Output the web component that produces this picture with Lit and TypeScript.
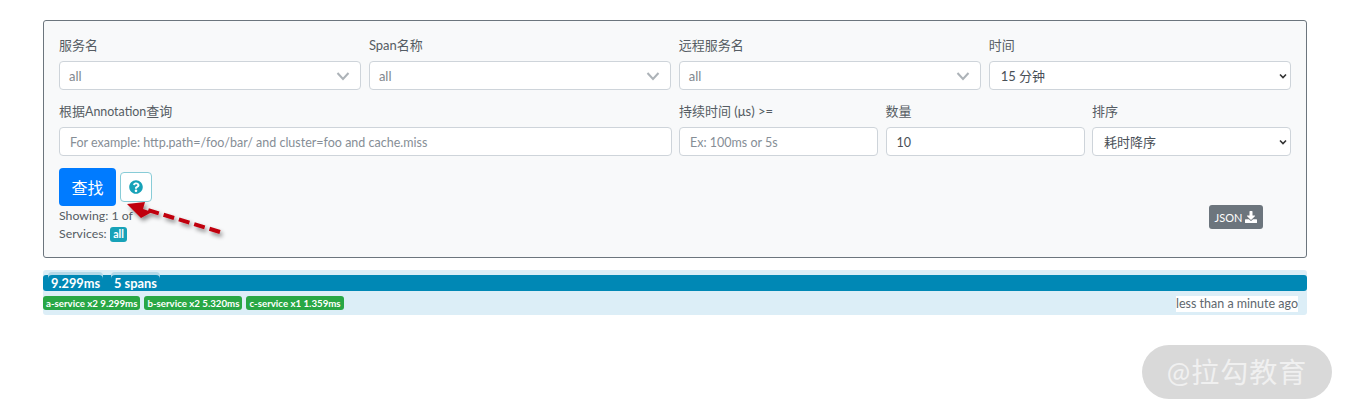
import { LitElement, html, css } from "lit";
import { customElement } from "lit/decorators.js";

@customElement("app-root")
export class AppRoot extends LitElement {
  static styles = css`
    :host {
      display: block;
      position: relative;
      width: 1350px;
      height: 417px;
      overflow: hidden;
      background: #fff;
      color: #495057;
      font-family: "Lato", "Noto Sans CJK SC", sans-serif;
      font-size: 12.5px;
    }
    .page { padding: 20px 43px 0; }
    .card {
      position: relative;
      box-sizing: border-box;
      height: 238px;
      border: 1px solid #6c757d;
      border-radius: 3px;
      background: #f8f9fa;
      padding: 15px 15px 0;
    }
    .row { display: grid; gap: 7.5px; height: 66px; }
    .r1 { grid-template-columns: repeat(4, minmax(0, 1fr)); }
    .r2 { grid-template-columns: 612.5px repeat(3, minmax(0, 1fr)); }
    .field { display: flex; flex-direction: column; min-width: 0; }
    label { height: 25px; line-height: 18px; color: #555c63; white-space: nowrap; font-size: 13px; }
    label .latin { font-size: 12.4px; }
    .ctl {
      box-sizing: border-box;
      width: 100%;
      height: 29px;
      border: 1px solid #ced4da;
      border-radius: 4px;
      background: #fff;
      padding: 1px 10px 0;
      font: inherit;
      color: #495057;
      outline: none;
    }
    select.ctl {
      appearance: none;
      padding: 0 0 0 11px;
      font-size: 13px;
      background: #fff url("data:image/svg+xml,%3Csvg xmlns='http://www.w3.org/2000/svg' width='8' height='6'%3E%3Cpath d='M1 1.5l3 3 3-3' fill='none' stroke='%23333' stroke-width='1.6'/%3E%3C/svg%3E") no-repeat right 3px center;
    }
    input.ctl::placeholder { color: #868e96; opacity: 1; }
    .combo { display: flex; align-items: center; justify-content: space-between; color: #7f868d; padding: 0 7px 0 9px; font-size: 13px; }
    .actions { display: flex; align-items: center; gap: 4px; height: 38px; }
    .search {
      width: 57px; height: 38px; border: 0; border-radius: 4px; background: #007bff; color: #fff;
      font: inherit; font-size: 16px; padding: 0;
    }
    .help {
      display: flex; align-items: center; justify-content: center;
      box-sizing: border-box; width: 32px; height: 30px;
      border: 1.5px solid #88ccd7; border-radius: 4px; background: #fff; padding: 0;
    }
    .meta { line-height: 18px; color: #555c63; padding-top: 1px; font-size: 12.3px; }
    .meta div { height: 18px; }
    .tag {
      display: inline-block; background: #17a2b8; color: #fff; font-size: 10.5px; font-weight: 700;
      line-height: 15px; padding: 0 3.5px; border-radius: 3px;
    }
    .json {
      position: absolute; left: 1165px; top: 184px;
      display: flex; align-items: center; justify-content: center; gap: 3px;
      box-sizing: border-box; width: 54px; height: 24px;
      background: #6c757d; color: #fff; border-radius: 3px; font-size: 11px;
    }
    .trace {
      margin-top: 12px; height: 45px; box-sizing: border-box; padding-top: 5px;
      background: #dceef7; border-radius: 3px; position: relative;
    }
    .bar {
      display: flex; height: 16px; background: #0088b5; border-radius: 3px; color: #fff;
      font-weight: 700; font-size: 12.8px; line-height: 17px; padding-left: 5px; gap: 8px;
    }
    .bar span { padding: 0 3px; box-shadow: 0 -3px 0 #b5d9e8; border-radius: 4px 4px 0 0; background: #0088b5; }
    .line { display: flex; align-items: center; justify-content: space-between; height: 24px; }
    .badges { display: flex; gap: 4px; margin-top: -1px; }
    .badge {
      background: #28a745; color: #fff; font-size: 9.7px; font-weight: 700; line-height: 14px;
      padding: 0 3px; border-radius: 3px; white-space: nowrap;
    }
    .ago { background: #fff; color: #60676e; font-size: 12.5px; line-height: 16px; margin: 1px 9px 0 0; }
    .arrow { position: absolute; left: 120px; top: 195px; }
    .mark {
      position: absolute; left: 1142px; top: 345px; width: 190px; height: 54px; border-radius: 27px;
      background: #d9d9d9; color: #f0f0f0; font-size: 28px; line-height: 54px; text-align: center;
      letter-spacing: 1px;
    }
  `;

  private chevron() {
    return html`<svg width="20" height="20" viewBox="0 0 20 20"><path d="M4.5 7l5.5 6 5.5-6" fill="none" stroke="#adb3b8" stroke-width="2"/></svg>`;
  }

  render() {
    return html`
      <div class="page">
        <div class="card">
          <div class="row r1">
            <div class="field"><label>服务名</label><div class="ctl combo">all ${this.chevron()}</div></div>
            <div class="field"><label>Span名称</label><div class="ctl combo">all ${this.chevron()}</div></div>
            <div class="field"><label>远程服务名</label><div class="ctl combo">all ${this.chevron()}</div></div>
            <div class="field"><label>时间</label><select class="ctl"><option>15 分钟</option></select></div>
          </div>
          <div class="row r2">
            <div class="field"><label>根据<span class="latin">Annotation</span>查询</label><input class="ctl" placeholder="For example: http.path=/foo/bar/ and cluster=foo and cache.miss" /></div>
            <div class="field"><label>持续时间 (μs) >=</label><input class="ctl" placeholder="Ex: 100ms or 5s" /></div>
            <div class="field"><label>数量</label><input class="ctl" value="10" /></div>
            <div class="field"><label>排序</label><select class="ctl"><option>耗时降序</option></select></div>
          </div>
          <div class="actions">
            <button class="search">查找</button>
            <button class="help">
              <svg width="14" height="14" viewBox="0 0 512 512"><path fill="#17a2b8" d="M504 256c0 137-111 248-248 248S8 393 8 256 119 8 256 8s248 111 248 248zM263 90c-54 0-89 23-116 63-4 5-3 12 3 16l35 26c5 4 13 3 17-2 18-23 31-36 58-36 21 0 47 14 47 34 0 15-13 23-34 35-24 14-56 31-56 74v6c0 7 5 12 12 12h56c7 0 12-5 12-12v-3c0-30 87-31 87-112 0-61-63-101-121-101zm-7 258c-26 0-48 21-48 48s22 48 48 48 48-21 48-48-22-48-48-48z"/></svg>
            </button>
          </div>
          <div class="meta">
            <div>Showing: 1 of</div>
            <div>Services: <span class="tag">all</span></div>
          </div>
          <div class="json">JSON
            <svg width="12" height="12" viewBox="0 0 512 512"><path fill="#fff" d="M216 0h80c13 0 24 11 24 24v168h88c18 0 27 21 14 34L270 378c-7 8-21 8-28 0L90 226c-13-13-4-34 14-34h88V24c0-13 11-24 24-24zM512 376v112c0 13-11 24-24 24H24c-13 0-24-11-24-24V376c0-13 11-24 24-24h147l49 49c20 20 52 20 72 0l49-49h147c13 0 24 11 24 24z"/></svg>
          </div>
        </div>
        <div class="trace">
          <div class="bar"><span>9.299ms</span><span>5 spans</span></div>
          <div class="line">
            <div class="badges">
              <span class="badge">a-service x2 9.299ms</span>
              <span class="badge">b-service x2 5.320ms</span>
              <span class="badge">c-service x1 1.359ms</span>
            </div>
            <span class="ago">less than a minute ago</span>
          </div>
        </div>
      </div>
      <svg class="arrow" width="110" height="50" viewBox="0 0 110 50">
        <defs><filter id="s" x="-20%" y="-40%" width="150%" height="200%"><feDropShadow dx="2" dy="3" stdDeviation="2" flood-color="#000" flood-opacity=".45"/></filter></defs>
        <g filter="url(#s)">
          <path d="M100 37L28 15" stroke="#c00010" stroke-width="4" stroke-dasharray="11 5" fill="none"/>
          <path d="M7 9L25 7 23 14 32 17 21 23z" fill="#c00010"/>
        </g>
      </svg>
      <div class="mark">@拉勾教育</div>
    `;
  }
}
